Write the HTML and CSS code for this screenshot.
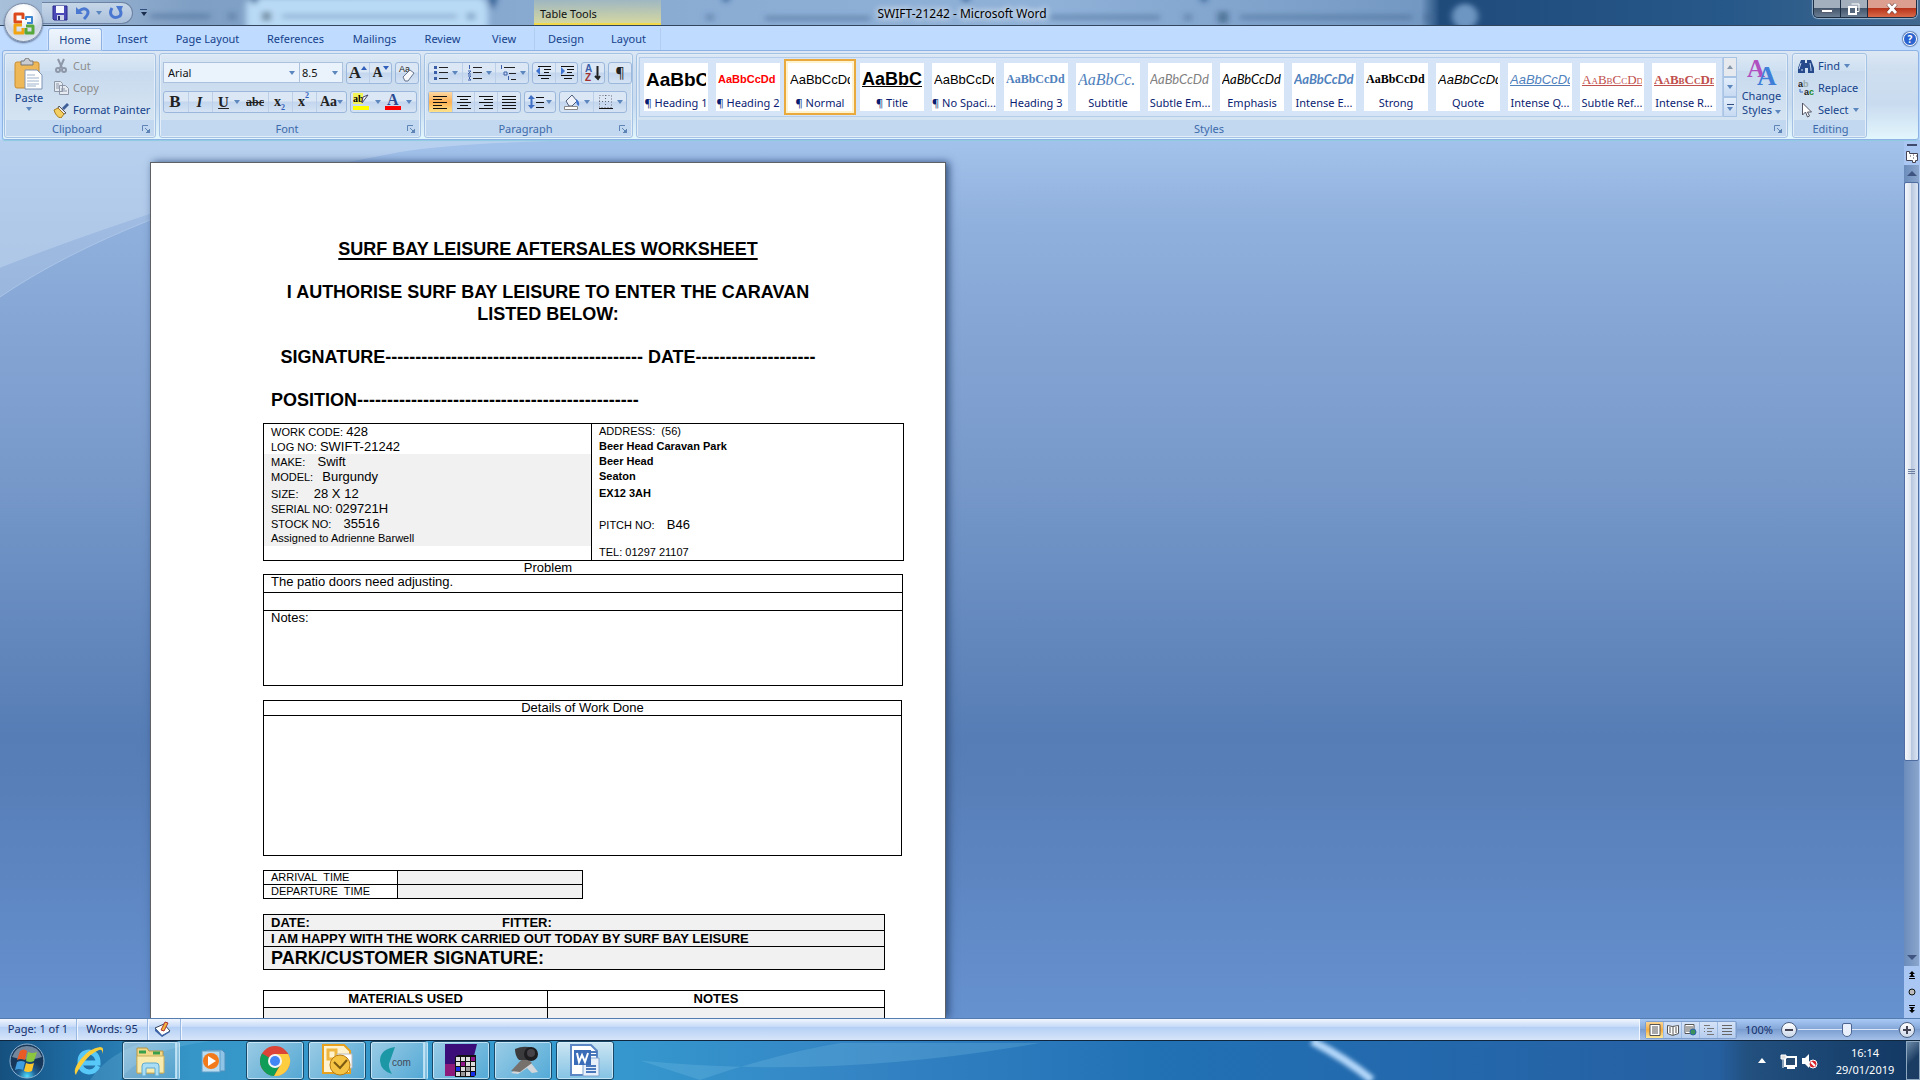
FILE: index.html
```html
<!DOCTYPE html>
<html lang="en">
<head>
<meta charset="utf-8">
<title>SWIFT-21242 - Microsoft Word</title>
<link rel="stylesheet" href="styles.css">
</head>
<body>
<header class="titlebar">
  <svg class="glass" preserveAspectRatio="none" viewBox="0 0 1920 26" aria-hidden="true">
    <defs>
      <linearGradient id="gl" x1="0" x2="1" y1="0" y2="0"><stop offset="0" stop-color="#a9c0da"/><stop offset=".1" stop-color="#7f9fc4"/><stop offset=".3" stop-color="#89abd2"/><stop offset=".55" stop-color="#8fb1d8"/><stop offset=".74" stop-color="#7398c2"/><stop offset=".75" stop-color="#1f4b7b"/><stop offset=".9" stop-color="#265889"/><stop offset="1" stop-color="#41688f"/></linearGradient>
      <filter id="soft" x="-20%" y="-80%" width="140%" height="260%"><feGaussianBlur stdDeviation="3"/></filter>
    </defs>
    <rect width="1920" height="26" fill="url(#gl)"/>
    <g filter="url(#soft)">
      <path d="M246 30V6q0-6 8-8h226q8 2 8 16v16z" fill="#b9daf5"/>
      <path d="M488-4h10l-6 16zM250-4h10l-6 10z" fill="#2e5c90"/>
      <circle cx="1465" cy="17" r="13" fill="#6e96c2"/>
      <g fill="#3c5f8a" opacity=".4"><rect x="150" y="14" width="60" height="6"/><rect x="282" y="14" width="175" height="6" opacity=".6"/><rect x="262" y="12" width="9" height="10" fill="#123"/><rect x="467" y="13" width="8" height="8"/><rect x="228" y="13" width="8" height="8"/><rect x="765" y="16" width="105" height="6"/><rect x="706" y="14" width="8" height="8"/><rect x="1050" y="15" width="110" height="6"/><rect x="1184" y="14" width="8" height="8"/><rect x="1218" y="12" width="10" height="12" fill="#124"/><rect x="1240" y="15" width="172" height="6"/><rect x="1424" y="14" width="8" height="8"/></g>
      <path d="M722-4h8l-4 8zM962-4h8l-4 8zM1200-4h8l-4 8z" fill="#245185"/>
    </g>
  </svg>
  <div class="qat">
    <button aria-label="Save"><svg width="16" height="16" viewBox="0 0 16 16"><path d="M1 1h14v14H2l-1-1z" fill="#4b48b8" stroke="#29298a"/><path d="M4 1h8v7H4z" fill="#f4f7ff"/><path d="M5 10h7v5H5z" fill="#ccd3e8"/><path d="M6 11h2v4H6z" fill="#222a70"/></svg></button>
    <button aria-label="Undo"><svg width="16" height="16" viewBox="0 0 16 16"><path d="M2 2v7h7z" fill="#4a78d0"/><path d="M5 6q5-4 8-1t-3 9" fill="none" stroke="#4a78d0" stroke-width="3"/></svg></button>
    <span class="caret"></span>
    <button aria-label="Repeat"><svg width="16" height="16" viewBox="0 0 16 16"><path d="M4 3q-3 5 0 8t8 0q2-3 0-6" fill="none" stroke="#4a78d0" stroke-width="3"/><path d="M8 1h7l-3 7z" fill="#4a78d0"/></svg></button>
  </div>
  <button class="customise" aria-label="Customise Quick Access Toolbar"><span class="bar"></span><span class="caret dark"></span></button>
  <div class="context">Table Tools</div>
  <h1 class="caption">SWIFT-21242 - Microsoft Word</h1>
  <div class="winctl">
    <button aria-label="Minimise"><svg width="12" height="12" viewBox="0 0 12 12"><path d="M.5 6.500h11v3H.5z" fill="#fff" stroke="#555e70"/></svg></button>
    <button aria-label="Restore"><svg width="12" height="12" viewBox="0 0 12 12"><path d="M3.500 1h7.500v7.500H9" fill="none" stroke="#fff" stroke-width="1"/><path d="M1 4h7v7H1z" fill="#55677d" stroke="#fff" stroke-width="2"/></svg></button>
    <button class="close" aria-label="Close"><svg width="12" height="12" viewBox="0 0 12 12"><path d="M2 1l8 9M10 1l-8 9" stroke="#5a2a26" stroke-width="4"/><path d="M2 1l8 9M10 1l-8 9" stroke="#fff" stroke-width="3"/></svg></button>
  </div>
  <button class="orb-office" aria-label="Office Button"><svg width="24" height="24" viewBox="0 0 24 24" fill="none" stroke-width="3" stroke-linejoin="round"><path d="M10 11H3V3h8v5" stroke="#dc4a1c"/><path d="M14 9V6h6v6h-5" stroke="#3a86d0" stroke-width="2"/><path d="M10 14H3v8h8v-5" stroke="#f2a413"/><path d="M14 15h7v7h-7v-5" stroke="#57a83a"/></svg></button>
</header>

<nav class="tabs">
  <button class="tab active">Home</button><button class="tab">Insert</button><button class="tab">Page Layout</button><button class="tab">References</button><button class="tab">Mailings</button><button class="tab">Review</button><button class="tab">View</button><button class="tab ctx first">Design</button><button class="tab ctx">Layout</button>
  <button class="help" aria-label="Help">?</button>
</nav>

<section class="ribbon">
  <div class="group clipboard">
    <div class="body">
      <button class="big"><svg width="30" height="32" viewBox="0 0 30 32"><rect x="1" y="4" width="24" height="26" rx="2" fill="#eeb859" stroke="#c98d33"/><path d="M7 3h3q1-3 3-3t3 3h3v4H7z" fill="#c9ccd2" stroke="#777"/><path d="M11 12h12l5 5v14H11z" fill="#fff" stroke="#7f94b5"/><path d="M13 17h8M13 20h12M13 23h12M13 26h12M13 28h9" stroke="#9fb2cc"/></svg>Paste<span class="caret"></span></button>
      <div class="stack">
        <button disabled><svg width="16" height="16" viewBox="0 0 16 16" fill="none" stroke="#8d97a8" stroke-width="2"><path d="M5 1l4 9M11 1L7 10"/><circle cx="5" cy="12" r="2"/><circle cx="11" cy="12" r="2"/></svg>Cut</button>
        <button disabled><svg width="16" height="16" viewBox="0 0 16 16" fill="#e6ebf2" stroke="#8d97a8"><path d="M1.500 1.500h6l2 2v8h-8zM6.500 5.500h6l3 3v6h-9z"/><path d="M8 9h4M8 11h6M3 4h3M3 6h3M3 8h3"/></svg>Copy</button>
        <button><svg width="16" height="16" viewBox="0 0 16 16"><path d="M9 6l5-5 2 2-5 5z" fill="#3f5f98"/><path d="M6 4l7 7-2 1-6-6z" fill="#e8e8ee" stroke="#555"/><path d="M1 8l4-2 6 6-3 4q-5-1-7-8z" fill="#f3cf62" stroke="#a87a1c"/></svg>Format Painter</button>
      </div>
    </div>
    <div class="glabel"><span>Clipboard</span><svg class="launch" viewBox="0 0 8 8"><use href="#la"/></svg></div>
  </div>

  <div class="group fontg">
    <div class="body rows">
      <div class="row">
        <div class="combos"><label class="combo face"><input value="Arial" aria-label="Font"><span class="caret"></span></label><label class="combo size"><input value="8.5" aria-label="Font size"><span class="caret"></span></label></div>
        <div class="set"><button class="serif b17" aria-label="Grow font">A<sup class="tri up"></sup></button><button class="serif b14" aria-label="Shrink font">A<sup class="tri down"></sup></button></div>
        <div class="set"><button aria-label="Clear formatting"><svg width="18" height="18" viewBox="0 0 18 18"><text x="1" y="8" font-size="9" font-family="Liberation Sans" fill="#222">Aa</text><path d="M5 13l7-7 4 3-6 8H7z" fill="#f6f8fc" stroke="#66758f"/></svg></button></div>
      </div>
      <div class="row">
        <div class="set wide"><button class="serif b17">B</button><button class="serif it">I</button><button class="serif un">U</button><i class="caret"></i><button class="serif st">abc</button><button class="serif b14">x<sub>2</sub></button><button class="serif b14">x<sup>2</sup></button><button class="serif b14 aa">Aa<i class="caret"></i></button></div>
        <div class="set ink"><button aria-label="Highlight"><svg width="20" height="18" viewBox="0 0 20 18"><path d="M1 0h10v11H1z" fill="#f3f35a"/><text x="1" y="9" font-size="10" font-weight="bold" font-family="Liberation Serif">ab</text><path d="M16 2l-6 8 1-6z" fill="#fff" stroke="#446"/><path d="M1 13h16v4H1z" fill="#ffff00"/></svg></button><i class="caret"></i><button aria-label="Font colour"><svg width="18" height="18" viewBox="0 0 18 18"><text x="3" y="12" font-size="16" font-weight="bold" font-family="Liberation Serif" fill="#2b4a94">A</text><path d="M1 13h16v4H1z" fill="#f00"/></svg></button><i class="caret"></i></div>
      </div>
    </div>
    <div class="glabel"><span>Font</span><svg class="launch" viewBox="0 0 8 8"><use href="#la"/></svg></div>
  </div>

  <div class="group para">
    <div class="body rows">
      <div class="row">
        <div class="set lists"><button aria-label="Bullets"><svg width="16" height="16" viewBox="0 0 16 16"><path d="M1 1h3v3H1zM1 6h3v3H1zM1 12h3v3H1z" fill="#3b5ea8"/><path d="M6 2.500h9M6 7.500h9M6 13.500h9" stroke="#222"/></svg><i class="caret"></i></button><button aria-label="Numbering"><svg width="16" height="16" viewBox="0 0 16 16"><path d="M2.500 0v4M1 6h3l-3 3h3M1 11h3l-2 2 2 2H1" fill="none" stroke="#3b5ea8"/><path d="M6 2.500h9M6 7.500h9M6 13.500h9" stroke="#222"/></svg><i class="caret"></i></button><button aria-label="Multilevel list"><svg width="18" height="16" viewBox="0 0 18 16"><path d="M2.500 0v4M5 7h3v3H5zM9.500 11v4" fill="none" stroke="#3b5ea8"/><path d="M5 2.500h11M10 8.500h7M12 14.500h5" stroke="#222"/></svg><i class="caret"></i></button></div>
        <div class="set ind"><button aria-label="Decrease indent"><svg width="16" height="16" viewBox="0 0 16 16"><path d="M2 1.500h13M8 4.500h7M8 7.500h5M2 10.500h13M5 13.500h8" stroke="#111"/><path d="M0 6l4-4v8z" fill="#3f73d0"/></svg></button><button aria-label="Increase indent"><svg width="16" height="16" viewBox="0 0 16 16"><path d="M2 1.500h13M8 4.500h7M8 7.500h5M2 10.500h13M5 13.500h8" stroke="#111"/><path d="M6 6L2 2v8z" fill="#3f73d0"/></svg></button></div>
        <div class="set"><button aria-label="Sort"><svg width="18" height="18" viewBox="0 0 18 18" font-size="10" font-weight="bold" font-family="Liberation Sans"><text x="1" y="8" fill="#3b5ea8">A</text><text x="1" y="17" fill="#a13030">Z</text><path d="M13.500 2v12M11 12l3 3 2-3" fill="none" stroke="#222" stroke-width="2"/></svg></button></div>
        <div class="set"><button class="pil" aria-label="Show marks">¶</button></div>
      </div>
      <div class="row">
        <div class="set al"><button class="on" aria-label="Align left"><svg width="16" height="14" viewBox="0 0 16 14"><path d="M1 1.500h14M1 4.500h9M1 7.500h14M1 10.500h9M1 13.500h14" stroke="#111"/></svg></button><button aria-label="Centre"><svg width="16" height="14" viewBox="0 0 16 14"><path d="M1 1.500h14M4 4.500h8M1 7.500h14M4 10.500h8M1 13.500h14" stroke="#111"/></svg></button><button aria-label="Align right"><svg width="16" height="14" viewBox="0 0 16 14"><path d="M1 1.500h14M6 4.500h9M1 7.500h14M6 10.500h9M1 13.500h14" stroke="#111"/></svg></button><button aria-label="Justify"><svg width="16" height="14" viewBox="0 0 16 14"><path d="M1 1.500h14M1 4.500h14M1 7.500h14M1 10.500h14M1 13.500h14" stroke="#111"/></svg></button></div>
        <div class="set sp"><button aria-label="Line spacing"><svg width="16" height="16" viewBox="0 0 16 16"><path d="M3.500 3v10" stroke="#3f6fc4" stroke-width="2"/><path d="M0 5l3-4 4 4zM0 11l3 4 4-4z" fill="#3f6fc4"/><path d="M8 3.500h8M8 8.500h8M8 13.500h8" stroke="#111"/></svg><i class="caret"></i></button></div>
        <div class="set sh"><button aria-label="Shading"><svg width="18" height="18" viewBox="0 0 18 18"><path d="M3 8l6-6 5 6-5 5H6z" fill="#f0f4fa" stroke="#4c5c7a"/><path d="M13 6q4 2 3 7-3-1-3-7z" fill="#3f73d0"/><path d="M1.500 13.500h13v3h-13z" fill="#fff" stroke="#888"/></svg><i class="caret"></i></button><button aria-label="Borders"><svg width="16" height="16" viewBox="0 0 16 16"><path d="M1.500 1.500h12v12h-12zM7.500 1v12M1 7.500h12" fill="none" stroke="#667" stroke-dasharray="1 2"/><path d="M1 14.500h14" stroke="#111"/></svg><i class="caret"></i></button></div>
      </div>
    </div>
    <div class="glabel"><span>Paragraph</span><svg class="launch" viewBox="0 0 8 8"><use href="#la"/></svg></div>
  </div>

  <div class="group styles">
    <div class="body">
      <div class="gallery">
        <button class="style"><b class="s h1s">AaBbC</b><span>¶ Heading 1</span></button>
        <button class="style"><b class="s h2s">AaBbCcDd</b><span>¶ Heading 2</span></button>
        <button class="style sel"><b class="s">AaBbCcDd</b><span>¶ Normal</span></button>
        <button class="style"><b class="s tts">AaBbC</b><span>¶ Title</span></button>
        <button class="style"><b class="s">AaBbCcDd</b><span>¶ No Spaci...</span></button>
        <button class="style"><b class="s ser bold blue">AaBbCcDd</b><span>Heading 3</span></button>
        <button class="style"><b class="s sub">AaBbCc.</b><span>Subtitle</span></button>
        <button class="style"><b class="s lat grey">AaBbCcDd</b><span>Subtle Em...</span></button>
        <button class="style"><b class="s lat">AaBbCcDd</b><span>Emphasis</span></button>
        <button class="style"><b class="s lat bold blue">AaBbCcDd</b><span>Intense E...</span></button>
        <button class="style"><b class="s ser bold">AaBbCcDd</b><span>Strong</span></button>
        <button class="style"><b class="s ital">AaBbCcDd</b><span>Quote</span></button>
        <button class="style"><b class="s ital blue line">AaBbCcDd</b><span>Intense Q...</span></button>
        <button class="style"><b class="s caps">AaBbCcDd</b><span>Subtle Ref...</span></button>
        <button class="style"><b class="s caps bold">AaBbCcDd</b><span>Intense R...</span></button>
      </div>
      <div class="gscroll"><button aria-label="Previous row" disabled><i class="caret flip"></i></button><button aria-label="Next row"><i class="caret"></i></button><button aria-label="More styles"><i class="bar"></i><i class="caret"></i></button></div>
      <button class="big change"><svg width="30" height="30" viewBox="0 0 30 30" font-family="Liberation Serif" font-weight="bold"><text x="0" y="19" font-size="25" fill="#b04fc0">A</text><text x="10" y="27" font-size="27" fill="#3f7fd8">A</text></svg>Change<span>Styles <i class="caret"></i></span></button>
    </div>
    <div class="glabel"><span>Styles</span><svg class="launch" viewBox="0 0 8 8"><use href="#la"/></svg></div>
  </div>

  <div class="group editing">
    <div class="body"><div class="stack">
      <button><svg width="16" height="16" viewBox="0 0 16 16"><path d="M3 2h4v3h2V2h4l3 8v5h-6v-5H7v5H0v-5z" fill="#274a8c"/><path d="M3 5l-2 6M12 5l1 6M4 11v2M13 11v2" stroke="#c7d9f3"/></svg>Find <i class="caret"></i></button>
      <button><svg width="16" height="16" viewBox="0 0 16 16" font-size="9" font-weight="bold" font-family="Liberation Sans"><text x="0" y="7" fill="#222">a<tspan fill="#9aa">b</tspan></text><text x="6" y="15" fill="#222">a<tspan fill="#1a8a2a">c</tspan></text><path d="M2 9v3h3" fill="none" stroke="#3f6fc4"/></svg>Replace</button>
      <button><svg width="16" height="16" viewBox="0 0 16 16"><path d="M4.500 1v12l3-3 2 5 2-1-2-4h4z" fill="#fff" stroke="#556"/></svg>Select <i class="caret"></i></button>
    </div></div>
    <div class="glabel"><span>Editing</span></div>
  </div>
</section>

<main class="workspace">
  <svg class="swoosh" width="600" height="180" viewBox="0 0 600 180" aria-hidden="true"><path d="M0 0h600Q460 2 400 12 260 38 150 74 60 104 0 128z" fill="#c6dbf2" opacity=".6"/><path d="M0 128Q60 104 150 74L355 22 150 80Q60 116 0 157z" fill="#bcd0ea" opacity=".35"/><path d="M0 157Q60 116 150 80" fill="none" stroke="#b9d0ee" opacity=".6"/></svg>
  <article class="page">
    <h2 class="head under">SURF BAY LEISURE AFTERSALES WORKSHEET</h2>
    <p class="head">I AUTHORISE SURF BAY LEISURE TO ENTER THE CARAVAN<br>LISTED BELOW:</p>
    <p class="head nowrap">SIGNATURE------------------------------------------- DATE--------------------</p>
    <p class="head left nowrap">POSITION-----------------------------------------------</p>

    <table class="sheet job">
      <tr>
        <td class="jobinfo">
          <p>WORK CODE: <b>428</b></p><p>LOG NO: <b>SWIFT-21242</b></p>
          <div class="shade"><p>MAKE: &nbsp;&nbsp; <b>Swift</b></p><p>MODEL: &nbsp; <b>Burgundy</b></p><p class="roomy">SIZE: &nbsp;&nbsp;&nbsp; <b>28 X 12</b></p><p>SERIAL NO: <b>029721H</b></p><p>STOCK NO: &nbsp;&nbsp; <b>35516</b></p><p>Assigned to Adrienne Barwell</p></div>
        </td>
        <td class="address">
          <p>ADDRESS: &nbsp;(56)</p>
          <address><p>Beer Head Caravan Park</p><p>Beer Head</p><p>Seaton</p><p class="roomy">EX12 3AH</p></address>
          <p class="pitch">PITCH NO: &nbsp;&nbsp; <b>B46</b></p><p class="tel">TEL: 01297 21107</p>
        </td>
      </tr>
    </table>
    <p class="problem">Problem</p>
    <table class="sheet prob"><tr class="r18"><td>The patio doors need adjusting.</td></tr><tr class="r18"><td></td></tr><tr class="notes"><td>Notes:</td></tr></table>
    <table class="sheet work"><tr><th>Details of Work Done</th></tr><tr class="blank"><td></td></tr></table>
    <table class="sheet times"><tr><th scope="row">ARRIVAL&nbsp; TIME</th><td class="fill"></td></tr><tr><th scope="row">DEPARTURE&nbsp; TIME</th><td class="fill"></td></tr></table>
    <table class="sheet sign fill"><tr><td><div class="two"><span>DATE:</span><span>FITTER:</span></div></td></tr><tr><td>I AM HAPPY WITH THE WORK CARRIED OUT TODAY BY SURF BAY LEISURE</td></tr><tr class="large"><td>PARK/CUSTOMER SIGNATURE:</td></tr></table>
    <table class="sheet mats"><tr><th>MATERIALS USED</th><th>NOTES</th></tr><tr class="fill"><td></td><td></td></tr></table>
  </article>
  <aside class="vscroll">
    <span class="split"></span>
    <button aria-label="View ruler"><svg width="14" height="14" viewBox="0 0 14 14"><path d="M1.500 1.500h3v2h8v7h-2v2h-3v-2h-6z" fill="#fff" stroke="#445"/><path d="M5 6h1M8 5h1M8 8h1M11 6h1" stroke="#445"/></svg></button>
    <div class="track"><button aria-label="Scroll up"><i class="caret flip slate"></i></button><div class="thumb"><i></i><i></i><i></i></div><button aria-label="Scroll down"><i class="caret slate"></i></button></div>
    <button class="nav" aria-label="Previous page"><svg width="10" height="8" viewBox="0 0 10 8"><path d="M5 0l3 3H6v1l2 2H2l2-2V3H2zM2 7h6v1H2z"/></svg></button>
    <button class="nav" aria-label="Browse object"><svg width="8" height="8" viewBox="0 0 8 8"><circle cx="4" cy="4" r="3" fill="#bbb" stroke="#111"/></svg></button>
    <button class="nav" aria-label="Next page"><svg width="10" height="8" viewBox="0 0 10 8"><path d="M5 8l3-3H6V4l2-2H2l2 2v1H2zM2 0h6v1H2z"/></svg></button>
  </aside>
</main>

<footer class="status">
  <button class="page-no">Page: 1 of 1</button><button class="words">Words: 95</button>
  <button class="proof" aria-label="Proofing"><svg width="18" height="16" viewBox="0 0 18 16"><path d="M1 7l9-4 6 7-8 5z" fill="#fff" stroke="#345"/><path d="M1 7v3l7 6 8-5v-1l-8 4z" fill="#3d64a8"/><path d="M7 9l4-8 3 1-4 8z" fill="#f3b53c" stroke="#a33"/></svg></button>
  <div class="right">
    <div class="views">
      <button class="on" aria-label="Print layout"><svg width="12" height="12" viewBox="0 0 12 12"><path d="M1 .5h10v11H1z" fill="#fff" stroke="#555"/><path d="M3 3h6M3 5h6M3 7h6M3 9h6" stroke="#555"/></svg></button>
      <button aria-label="Full screen reading"><svg width="12" height="12" viewBox="0 0 12 12"><path d="M.5 1.500l5 1 6-1v8l-6 2-5-2z" fill="#fff" stroke="#555"/><path d="M6 2v9M2 4h2M2 6h2M2 8h2M8 4h2M8 6h2M8 8h2" stroke="#555"/></svg></button>
      <button aria-label="Web layout"><svg width="13" height="12" viewBox="0 0 13 12"><path d="M1 .5h9v9H1z" fill="#fff" stroke="#555"/><path d="M2 3h7M2 5h7M2 7h4" stroke="#555"/><circle cx="9" cy="8" r="3" fill="#3a8f5a" stroke="#2c63ac"/></svg></button>
      <button aria-label="Outline"><svg width="12" height="12" viewBox="0 0 12 12"><path d="M1 1.500h6M4 4.500h7M4 7.500h5M4 10.500h7M1 4.500h1M1 7.500h1" stroke="#777"/></svg></button>
      <button aria-label="Draft"><svg width="12" height="12" viewBox="0 0 12 12"><path d="M1 1.500h10M1 4.500h10M1 7.500h10M1 10.500h10" stroke="#666"/></svg></button>
    </div>
    <button class="pct">100%</button>
    <button class="round" aria-label="Zoom out"><svg width="8" height="8" viewBox="0 0 8 8"><path d="M0 4h8" stroke="#445" stroke-width="2"/></svg></button>
    <input class="zoom" type="range" min="10" max="190" value="98" aria-label="Zoom">
    <button class="round" aria-label="Zoom in"><svg width="8" height="8" viewBox="0 0 8 8"><path d="M0 4h8M4 0v8" stroke="#445" stroke-width="2"/></svg></button>
  </div>
</footer>

<div class="taskbar">
  <svg class="wall" preserveAspectRatio="none" viewBox="0 0 1920 40" aria-hidden="true">
    <defs><linearGradient id="tb"><stop offset="0" stop-color="#15507f"/><stop offset=".04" stop-color="#1f6da4"/><stop offset=".1" stop-color="#3696c8"/><stop offset=".3" stop-color="#359bcf"/><stop offset=".45" stop-color="#3484c4"/><stop offset=".6" stop-color="#2171b5"/><stop offset=".85" stop-color="#2562a5"/><stop offset=".895" stop-color="#2660a0"/><stop offset=".91" stop-color="#22507f"/><stop offset="1" stop-color="#123762"/></linearGradient><filter id="b2" x="-50%" width="200%"><feGaussianBlur stdDeviation="2"/></filter></defs>
    <rect width="1920" height="40" fill="url(#tb)"/>
    <path d="M90 40q20-30 60-40h60q-70 10-90 40z" fill="#7cc4e6" opacity=".25"/>
    <path d="M640 20q190 20 400-18h-200q-60 10-140 38z" fill="#8fd0f0" opacity=".2"/>
    <path d="M1312 0q34 18 60 40" fill="none" stroke="#b5d8fb" stroke-width="8" filter="url(#b2)"/>
  </svg>
  <button class="start" aria-label="Start"><svg width="38" height="38" viewBox="0 0 38 38"><defs><radialGradient id="so" cy=".95"><stop offset="0" stop-color="#4fe0ff"/><stop offset=".5" stop-color="#1f5f94"/><stop offset="1" stop-color="#16375a"/></radialGradient></defs><circle cx="19" cy="19" r="17" fill="url(#so)" stroke="#8fb5d3"/><path d="M4 15q4-11 15-11t15 11q-14 5-30 0z" fill="#fff" opacity=".4"/><path d="M12 9q4-3 7 0l-2 9q-4-2-8 0z" fill="#ea5a24"/><path d="M20 10q4 2 9 0l-3 9q-4 2-8 0z" fill="#8cc63f"/><path d="M9 20q4-2 8 0l-2 8q-4-2-8 0z" fill="#3f9de0"/><path d="M18 21q4 2 8 0l-2 8q-4 2-8 0z" fill="#fdc52c"/></svg></button>
  <button class="task" aria-label="Internet Explorer"><svg width="34" height="34" viewBox="0 0 34 34"><path d="M26 22q-3 6-9 6-9-1-9-10t9-10q9 1 9 11H10" fill="none" stroke="#58c8f8" stroke-width="5"/><path d="M4 31Q0 26 9 15T28 3q5 0 2 7 1-5-3-4-8 3-15 12T4 31z" fill="#f8cf3a"/></svg></button>
  <button class="task open double" aria-label="File Explorer"><svg width="34" height="34" viewBox="0 0 34 34"><path d="M4 4h10l2 3h14v22H4z" fill="#f0d888" stroke="#b69444"/><path d="M6 8h7M20 9h7" stroke="#3a9f4a" stroke-width="3"/><path d="M4 12h27v17H4z" fill="#f9eaae" stroke="#cbb05c"/><path d="M9 32V22q0-3 3-3h11q3 0 3 3v10h-4v-8h-9v8z" fill="#a9dcf5" stroke="#5fa9d0"/></svg></button>
  <button class="task" aria-label="Media Player"><svg width="30" height="30" viewBox="0 0 30 30"><path d="M8 4h16l3 3v18H12z" fill="#8fc4e6" stroke="#4e91be"/><path d="M4 5h18v21H4z" fill="#b9dcf0" stroke="#5a9cc7"/><circle cx="13" cy="15" r="8" fill="#f27a1a"/><path d="M10 10l8 5-8 5z" fill="#fff"/></svg></button>
  <button class="task open" aria-label="Chrome"><svg width="32" height="32" viewBox="0 0 32 32"><circle cx="16" cy="16" r="15" fill="#db4437"/><path d="M16 16L3 8.500A15 15 0 0 0 15 31l6-11z" fill="#0f9d58"/><path d="M16 9h13.300A15 15 0 0 1 15 31l7-12z" fill="#ffcd40"/><circle cx="16" cy="16" r="7" fill="#f4f4f4"/><circle cx="16" cy="16" r="5" fill="#4285f4"/></svg></button>
  <button class="task open" aria-label="Outlook"><svg width="34" height="34" viewBox="0 0 34 34"><path d="M3 1h21l6 6v22H3z" fill="#fff3cf" stroke="#e8a11c" stroke-width="2"/><path d="M8 6h8v9H8z" fill="none" stroke="#eeb53f" stroke-width="3"/><path d="M17 10h15v14H17z" fill="#fff" stroke="#bbb"/><circle cx="20" cy="21" r="10" fill="#f6c445" stroke="#b67c12"/><path d="M14 18l6 6 7-8" fill="none" stroke="#7c5a10" stroke-width="2"/></svg></button>
  <button class="task open double" aria-label="Web application"><svg width="40" height="30" viewBox="0 0 40 30"><path d="M17 1Q2 3 2 15q1 10 12 13Q9 20 12 15z" fill="#1c97a5"/><text x="14" y="20" font-size="10" font-family="Liberation Sans" fill="#3e4c5a">com</text></svg></button>
  <button class="task open" aria-label="Stock system"><svg width="34" height="34" viewBox="0 0 34 34"><path d="M1 0h32l-8 32H1z" fill="#3a0d78"/><path d="M1 20h12v12H1z" fill="#8b1a7a"/><path d="M11 13l3-2h18v20l-2 2H11z" fill="#111"/><g fill="#ddd"><path d="M12 13h4v4h-4zM17 13h4v4h-4zM22 13h4v4h-4zM12 18h4v4h-4zM22 18h4v4h-4zM27 18h4v4h-4zM17 23h4v4h-4zM27 23h4v4h-4zM12 28h4v4h-4zM22 28h4v4h-4z"/></g><path d="M27 13h4v4h-4zM17 18h4v4h-4z" fill="#90178a"/><path d="M12 23h4v4h-4zM27 28h4v4h-4z" fill="#1530e8"/><path d="M22 23h4v4h-4zM17 28h4v4h-4z" fill="#999"/></svg></button>
  <button class="task open" aria-label="Dictation"><svg width="34" height="34" viewBox="0 0 34 34"><path d="M5 29l10-7 10-3 7 9-6 1-5-5-9 6z" fill="#d3d6da"/><path d="M5 27L19 12l7 7-12 9z" fill="#77716d"/><path d="M9 5q9-4 17-1v12H13q-4-4-4-11z" fill="#3b3a3d"/><circle cx="25" cy="10" r="7" fill="#1e1d20"/><circle cx="25" cy="9" r="4" fill="#454347"/></svg></button>
  <button class="task open current" aria-label="Word"><svg width="32" height="34" viewBox="0 0 32 34"><path d="M2 1h20l6 6v24H2z" fill="#fff" stroke="#5b87c4" stroke-width="2"/><path d="M14 14h16v18H14z" fill="#e7f0fa" stroke="#7fa3cf"/><path d="M17 22h10M17 25h10M17 28h10M22 8h6M22 11h6" stroke="#4a78bb" stroke-width="2"/><path d="M5 6h17v15H5z" fill="#3a6cb8"/><path d="M8 9l2 9 3-7 3 7 3-9" fill="none" stroke="#fff" stroke-width="2"/></svg></button>
  <div class="tray">
    <button aria-label="Show hidden icons"><svg width="8" height="5" viewBox="0 0 8 5"><path d="M4 0l4 5H0z" fill="#fff"/></svg></button>
    <svg width="17" height="16" viewBox="0 0 17 16" aria-label="Network"><path d="M5 4h11v9H5z" fill="#26496f" stroke="#fff" stroke-width="2"/><path d="M7 15h8" stroke="#fff" stroke-width="2"/><path d="M1 2h5v4H1zM3 6v9" fill="#ddd" stroke="#fff"/></svg>
    <svg width="17" height="16" viewBox="0 0 17 16" aria-label="Muted"><path d="M1 5h3l4-4v14l-4-4H1z" fill="#fff"/><circle cx="12" cy="11" r="4" fill="#d8222a" stroke="#fff"/><path d="M10 9l4 4" stroke="#fff" stroke-width="2"/></svg>
    <div class="clock"><time>16:14</time><span>29/01/2019</span></div>
    <button class="desk" aria-label="Show desktop"></button>
  </div>
</div>
<svg width="0" height="0" class="defs" aria-hidden="true"><symbol id="la" viewBox="0 0 8 8"><path d="M.5 6V.5H6" fill="none" stroke="#5d84b5"/><path d="M3 3l3 3M8 4v4H4z" fill="#5d84b5" stroke="#5d84b5"/></symbol></svg>
</body>
</html>
```
FILE: styles.css
```css
* { box-sizing: border-box; }
body { margin: 0; height: 100vh; display: flex; flex-direction: column; overflow: hidden; background: #bfdbff; font: 11px/14px "Noto Sans", sans-serif; color: #15428b; }
button, input { font: inherit; color: inherit; border: 0; background: none; padding: 0; margin: 0; }
p, h1, h2 { margin: 0; }
svg { display: block; flex: none; }
.defs { position: absolute; }
.caret { display: inline-block; flex: none; width: 0; height: 0; border: 3px solid transparent; border-top: 4px solid #5b86be; border-bottom: 0; vertical-align: middle; }
.caret.flip { border-top: 0; border-bottom: 4px solid #8797ab; }
.caret.dark { border-top-color: #1a2c4c; }
.caret.slate { border-width: 5px; border-top-color: #3f5480; border-bottom-width: 0; }
.caret.slate.flip { border-top-width: 0; border-bottom: 5px solid #3f5480; }
.bar { width: 7px; height: 1px; background: #2f4f80; }

/* title bar: every part shares one grid cell over the glass */
.titlebar { position: relative; display: grid; flex: none; height: 26px; border-bottom: 1px solid #31465c; box-shadow: inset 0 -1px #c4d5e8; z-index: 3; }
.titlebar > * { grid-area: 1 / 1; align-self: center; }
.glass { position: absolute; inset: 0 0 1px; width: 100%; height: 25px; }
.qat { position: relative; align-self: start; margin: 2px 0 0 42px; width: 91px; height: 22px; display: flex; align-items: center; gap: 6px; padding-left: 10px; border: 1px solid #6c83a3; border-left: 0; border-radius: 0 12px 12px 0; background: linear-gradient(#c6d6e8, #aac0da); }
.customise { position: relative; justify-self: start; margin-left: 140px; display: flex; flex-direction: column; gap: 2px; align-items: center; }
.context { position: relative; margin-left: 534px; width: 127px; height: 25px; align-self: start; border-bottom: 2px solid #f2d94a; background: linear-gradient(rgba(190, 200, 170, .4), #d4d7a1); line-height: 28px; padding-left: 6px; font-size: 11px; color: #111; }
.caption { position: relative; justify-self: center; font-size: 12px; font-weight: 400; color: #000; margin: 2px 0 0 4px; text-shadow: 0 0 6px #fff, 0 0 8px #fff; }
.winctl { position: relative; justify-self: end; align-self: start; display: flex; margin-right: 3px; height: 18px; border: 1px solid #1c2e44; border-top: 0; border-radius: 0 0 5px 5px; overflow: hidden; box-shadow: 0 0 1px 1px rgba(220, 235, 250, .6); }
.winctl button { width: 27px; display: grid; place-items: center; background: linear-gradient(#a3afbc 45%, #44566c 50%, #6c7e93); border-right: 1px solid #1c2e44; }
.winctl .close { width: 48px; border: 0; background: linear-gradient(#dc9e8e 45%, #b8341a 50%, #d96a49); }
.orb-office { position: absolute; left: 4px; top: 3px; width: 39px; height: 39px; border-radius: 50%; border: 1px solid #7d8da6; display: grid; place-items: center; background: radial-gradient(circle at 50% 25%, #fff 20%, #ccd6e4 60%, #eef4fb); box-shadow: 0 1px 2px #56698a; }

.tabs { flex: none; height: 24px; padding: 2px 3px 0 46px; display: grid; grid-template-columns: 57px 59px 91px 85px 73px 63px 60px 63px 64px 1fr; font-size: 12px; line-height: 20px; background: #bfdbff; z-index: 2; }
.tab { font-size: 11px; }
.tab.active { margin: 0 1px 0 2px; border: 1px solid #8db2e3; border-bottom: 0; border-radius: 3px 3px 0 0; background: linear-gradient(#eef5fd, #dfe9f6); box-shadow: 0 0 2px #fff; }
.tab.first { border-left: 1px solid #b3cdf0; }
.tab.ctx:nth-child(9) { border-right: 1px solid #b3cdf0; }
.help { justify-self: end; align-self: center; width: 14px; height: 14px; border-radius: 50%; background: #2a62cf; border: 1px solid #fff; box-shadow: 0 0 1px 1px #6484b8; color: #fff; font-weight: 700; font-size: 10px; line-height: 12px; }

.ribbon { flex: none; height: 90px; display: flex; gap: 3px; padding: 2px 51px 1px 1px; margin: 0 1px 0 2px; border: 1px solid #8db2e3; border-radius: 3px; background: linear-gradient(#dce7f4, #cfdff0 20%, #c9dbef 60%, #e2f6fd); box-shadow: 0 1px 1px #8ccde0; z-index: 1; }
.group { display: flex; flex-direction: column; border: 1px solid #a4c3e4; border-radius: 3px; box-shadow: inset 0 0 0 1px #e3edf8; background: linear-gradient(#dde8f4, #cddff1 20%, #c8daee 21%, #d9e7f3); }
.glabel { height: 16px; margin: auto 1px 1px; padding: 1px 4px 0 0; display: flex; align-items: center; background: #c1d8f0; color: #3e6aaa; }
.glabel span { flex: 1; text-align: center; padding-left: 6px; }
.launch { width: 8px; height: 8px; }
.body { display: flex; padding: 4px 3px 0; height: 68px; }
.clipboard { width: 152px; }
.fontg { width: 262px; }
.para { width: 209px; }
.styles { flex: 1; min-width: 0; }
.editing { width: 75px; margin-left: 1px; }
.big { width: 42px; display: flex; flex-direction: column; align-items: center; gap: 1px; line-height: 13px; }
.big .caret { margin-top: 2px; }
.stack { display: flex; flex-direction: column; gap: 6px; padding: 0 0 0 3px; }
.stack button { display: flex; align-items: center; gap: 4px; height: 16px; white-space: nowrap; }
.stack button:disabled { color: #8d8d8d; }
.editing .stack { padding-left: 2px; }

.rows { flex-direction: column; gap: 7px; padding-top: 8px; }
.row { display: flex; gap: 3px; height: 22px; }
.combos { display: flex; }
.combo { display: flex; align-items: center; height: 21px; padding: 0 4px; border: 1px solid #abc1de; background: #eaf2fb; color: #111; }
.combo.face { width: 137px; }
.combo.size { width: 43px; border-left: 0; padding-left: 2px; }
.combo input { flex: 1; min-width: 0; width: 10px; height: 19px; }
.set { display: flex; align-items: center; border: 1px solid #9bb8dc; border-radius: 3px; background: linear-gradient(#dbe7f5 45%, #c3d6ee 50%, #d5e3f4); color: #222; }
.set button { width: 22px; height: 20px; display: flex; align-items: center; justify-content: center; }
.set button + button { border-left: 1px solid #bccfe8; }
.serif { font-family: "Liberation Serif", serif; font-size: 15px; font-weight: 700; }
.b17 { font-size: 17px; }
.b14 { font-size: 14px; }
.it { font-style: italic; }
.un { text-decoration: underline; }
.st { font-size: 12px; text-decoration: line-through; }
.serif sub, .serif sup { font-size: 8px; color: #2f5fbb; line-height: 8px; }
.serif sub { align-self: flex-end; }
.serif sup { align-self: flex-start; }
.tri { width: 0; height: 0; margin-top: 3px; border: 3px solid transparent; border-top: 0; border-bottom: 4px solid #2f5fbb; }
.tri.down { border-top: 4px solid #2f5fbb; border-bottom: 0; }
.wide { width: 184px; justify-content: space-between; }
.wide > .caret { margin: 0 2px 0 -2px; }
.set button.aa { width: 30px; }
.ink { width: 67px; justify-content: space-between; padding-right: 4px; }
.lists { width: 101px; }
.set.lists button { width: 33px; gap: 3px; }
.ind { width: 46px; }
.pil { font-size: 14px; }
.al { width: 93px; }
.set.al button { width: 23px; }
.al .on { background: linear-gradient(#fbd9a5, #fdb053 50%, #fde28a); }
.set.sp button { width: 30px; gap: 2px; }
.set.sh button { width: 33px; gap: 3px; }

.gallery { flex: 1; min-width: 0; display: flex; gap: 8px; height: 60px; margin-top: 1px; padding: 5px 4px; overflow: hidden; border: 1px solid #b6cde9; background: #d5e5f7; }
.styles .body { padding: 2px 3px 0 2px; }
.style { flex: none; width: 64px; height: 48px; background: #fff; display: flex; flex-direction: column; color: #0a1c72; }
.style span { width: 64px; text-align: center; white-space: nowrap; font-size: 11px; line-height: 15px; }
.style.sel { outline: 2px solid #e9a93c; outline-offset: 2px; box-shadow: 0 0 0 2px #fff3cf; }
.s { width: 60px; height: 31px; margin: 0 2px 1px; overflow: hidden; text-align: left; white-space: nowrap; font: 13px/33px "Liberation Sans", sans-serif; color: #000; }
.h1s { font-size: 19px; font-weight: 700; }
.h2s { font-size: 11px; font-weight: 700; color: #f00; }
.tts { font-size: 18px; font-weight: 700; text-decoration: underline; }
.ser { font-family: "Liberation Serif", serif; }
.bold { font-weight: 700; }
.blue { color: #4f81bd; }
.grey { color: #808080; }
.sub { font-family: "Liberation Serif", serif; font-style: italic; font-size: 16px; color: #4f81bd; }
.lat { font-family: Lato, sans-serif; font-style: italic; }
.ital { font-style: italic; }
.line { text-decoration: underline; }
.caps { font-family: "Liberation Serif", serif; font-variant: small-caps; text-decoration: underline; color: #c0504d; }
.ser.bold { font-size: 12px; }
.gscroll { width: 14px; height: 60px; margin-top: 1px; display: flex; flex-direction: column; }
.gscroll button { flex: 1; display: flex; flex-direction: column; align-items: center; justify-content: center; gap: 2px; border: 1px solid #a9c3e4; background: linear-gradient(#e3eefb, #c7daf2); }
.gscroll button:disabled { background: #e6e9ee; }
.change { width: 45px; margin: 2px 0 0 2px; }
.change span { white-space: nowrap; }

.workspace { position: relative; flex: 1; min-height: 0; display: flex; overflow: hidden; background: linear-gradient(#a3c2eb, #8fafdc 10%, #7799ca 38%, #567db5 68%, #587fb8 74%, #6692d0); }
.swoosh { position: absolute; left: 0; top: 0; }
.page { position: relative; flex: none; width: 796px; margin: 22px auto 0 150px; padding: 75px 120px 0; border: 1px solid #5e6166; border-bottom: 0; background: #fff; box-shadow: 3px 0 8px #33517f; color: #000; font: 13px/14px "Liberation Sans", sans-serif; }
.head { font-size: 18px; line-height: 22px; font-weight: 700; text-align: center; margin-bottom: 21px; }
.left { text-align: left; margin-bottom: 12px; }
.nowrap { white-space: nowrap; }
.under { text-decoration: underline 2px; text-underline-offset: 3px; }
.sheet { border-collapse: collapse; table-layout: fixed; margin-left: -8px; width: 640px; }
.sheet td, .sheet th { border: 1px solid #000; padding: 0 7px; text-align: left; vertical-align: top; font-weight: 400; }
.job { width: 641px; }
.job td { height: 136px; font-size: 11px; line-height: 15px; }
.job b { font-size: 13px; font-weight: 400; }
.job p { height: 15px; white-space: nowrap; }
.job .roomy { height: 17px; padding-top: 2px; }
.jobinfo { width: 328px; }
.shade { margin: 0 -7px; padding: 0 7px; background: #f1f1f1; }
address { font-style: normal; font-weight: 700; }
.job .pitch { margin-top: 16px; }
.job .tel { margin-top: 13px; }
.problem { text-align: center; line-height: 13px; }
.r18 { height: 18px; }
.notes { height: 75px; }
.work { margin-top: 14px; width: 639px; }
.work th { text-align: center; }
.work .blank { height: 140px; }
.times { margin-top: 14px; width: 320px; font-size: 11px; line-height: 13px; }
.times th { width: 134px; }
.fill { background: #f1f1f1; }
.sign { margin-top: 15px; width: 622px; line-height: 15px; }
.sign td { font-weight: 700; }
.two { display: grid; grid-template-columns: 231px 1fr; }
.sign .large td { font-size: 18px; line-height: 22px; }
.mats { margin-top: 20px; width: 622px; line-height: 16px; }
.mats th { text-align: center; font-weight: 700; }
.mats th:first-child { width: 284px; }
.mats td { height: 16px; }

.vscroll { position: relative; width: 16px; display: flex; flex-direction: column; align-items: center; background: #a9c7f2; padding: 4px 1px 1px 0; }
.split { width: 10px; height: 2px; margin-bottom: 3px; background: #3f4a6c; }
.vscroll > button { height: 16px; display: grid; place-items: center; }
.vscroll > .nav { height: 17px; }
.track { width: 15px; flex: 1; display: flex; flex-direction: column; background: linear-gradient(90deg, #6b8cbb, #8ba6cd); margin-bottom: 0; }
.track > button { height: 17px; display: grid; place-items: center; }
.track > button:last-child { margin-top: auto; }
.thumb { height: 579px; display: flex; flex-direction: column; align-items: center; justify-content: center; gap: 1px; border: 1px solid #4f6da3; border-radius: 2px; background: linear-gradient(90deg, #f4f7fb, #dde4ee 45%, #b9c7de 50%, #dbe5f3); }
.thumb i { width: 7px; height: 1px; background: #6c7fa0; }

.status { flex: none; height: 22px; display: flex; border-top: 1px solid #567db0; background: linear-gradient(#f0f6fe, #c9dcf8 35%, #b5d0f5 40%, #d6e5f9); color: #15306b; line-height: 18px; }
.status > button { padding-bottom: 1px; border-right: 1px solid #98b8e2; box-shadow: 1px 0 #f0f6ff; }
.page-no { width: 77px; }
.words { width: 71px; }
.status > .proof { width: 33px; padding-left: 6px; }
.right { margin-left: auto; width: 281px; display: flex; align-items: center; padding-left: 5px; border-left: 1px solid #f2f7ff; background: linear-gradient(#a9c9f5, #86a9da 45%, #7a9dd0 50%, #a4c0e8); }
.views { display: flex; height: 18px; width: 92px; border: 1px solid #7e9fce; border-radius: 2px; background: linear-gradient(#d5e3f7, #b6cdee); }
.views button { flex: 1; display: grid; place-items: center; border-right: 1px solid #9dbbe2; }
.views .on { background: linear-gradient(#fbd595, #f6ad3f 50%, #fdea9c); }
.pct { width: 44px; }
.round { width: 16px; height: 16px; border-radius: 50%; border: 1px solid #4c5f80; background: linear-gradient(#fff, #cbd8ea); display: grid; place-items: center; }
.zoom { appearance: none; width: 100px; height: 16px; margin: 0 1px; background: linear-gradient(#dbe7f8, #dbe7f8) center / 100% 1px no-repeat; }
.zoom::-webkit-slider-thumb { appearance: none; width: 10px; height: 14px; background: #e9f0fb; border: 1px solid #4b6491; border-radius: 2px 2px 5px 5px; }

.taskbar { position: relative; flex: none; height: 40px; display: flex; align-items: stretch; gap: 4px; padding-left: 8px; border-top: 1px solid #10263c; }
.wall { position: absolute; inset: 0; width: 100%; height: 100%; }
.taskbar button { position: relative; display: grid; place-items: center; }
.start { width: 38px; margin-right: 10px; }
.task { width: 58px; border-radius: 3px; }
.task.open { border: 1px solid #174867; box-shadow: inset 0 0 0 1px rgba(220, 242, 255, .7); background: linear-gradient(135deg, rgba(255, 255, 255, .5), rgba(200, 230, 250, .2)); }
.task.double { border-right: 4px double #bfe3f5; }
.task.current { background: linear-gradient(rgba(255, 255, 255, .75), rgba(210, 235, 250, .5)); }
.tray { position: relative; margin-left: auto; display: flex; align-items: center; gap: 8px; color: #fff; }
.tray > svg { margin-left: 6px; }
.tray > svg + svg { margin-left: -4px; }
.clock { width: 66px; margin-left: 6px; display: flex; flex-direction: column; align-items: center; font-size: 11px; line-height: 17px; }
.desk { width: 14px; height: 39px; border: 1px solid #8fa8c2; background: linear-gradient(135deg, #6d8aa8, #1c3d63 50%); }
```
